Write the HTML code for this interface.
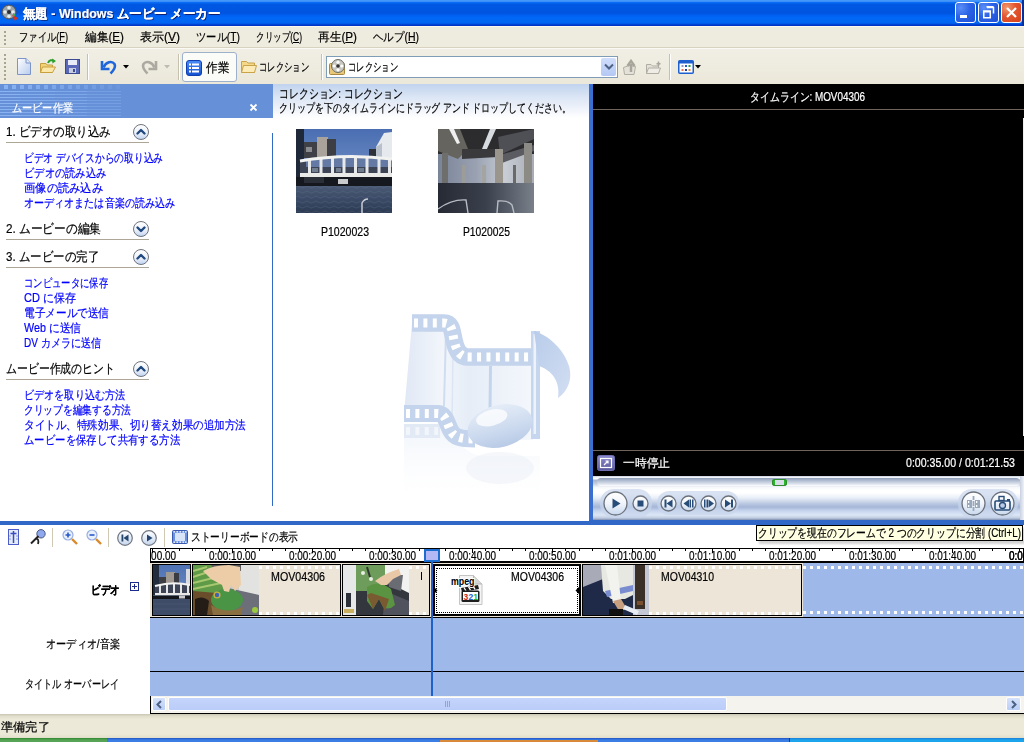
<!DOCTYPE html>
<html><head><meta charset="utf-8">
<style>
html,body{margin:0;padding:0;width:1024px;height:742px;overflow:hidden;background:#ECE9D8;font-family:"Liberation Sans",sans-serif;}
.a{position:absolute;}
.t{position:absolute;white-space:nowrap;font-size:12px;line-height:12px;color:#000;-webkit-text-stroke:0.2px currentColor;}
.f{transform-origin:0 0;}
.r{transform-origin:100% 0;}
</style></head><body>

<!-- TITLE BAR -->
<div class="a" style="left:0;top:0;width:1024px;height:26px;background:linear-gradient(#4A9CF8 0px,#3A8EF8 1.5px,#0A6CF4 2.5px,#0058E2 4.5px,#0054E0 13px,#0062F4 16px,#0068F6 18px,#0066F2 23px,#0044D4 24.5px,#0030C0 26px);"></div>
<div id="ttl" class="t f" style="left:23px;top:7px;width:205.719px;transform:scaleX(0.95762);font-size:13px;line-height:13px;font-weight:bold;color:#fff;text-shadow:1px 1px 0 #0A1E72;">無題 - Windows ムービー メーカー</div>
<!-- app icon -->
<svg class="a" style="left:1px;top:4px" width="18" height="18" viewBox="0 0 18 18">
 <circle cx="8" cy="8" r="7" fill="#9aa3a8" stroke="#4b5056" stroke-width="1"/>
 <circle cx="8" cy="8" r="2" fill="#2c2f33"/>
 <circle cx="8" cy="3.8" r="1.8" fill="#e8ecee"/><circle cx="4" cy="8" r="1.8" fill="#e8ecee"/><circle cx="12" cy="8" r="1.8" fill="#e8ecee"/><circle cx="8" cy="12.2" r="1.8" fill="#e8ecee"/>
 <path d="M11 11 L17 14 L14 17 Z" fill="#d8321c"/><path d="M12 9 L15 11 L12 13Z" fill="#3cae3a"/>
</svg>
<!-- window buttons -->
<div class="a" style="left:955px;top:2px;width:19px;height:19px;border:1px solid #fff;border-radius:3px;background:radial-gradient(circle at 25% 25%,#5a8ef8 0,#2c63e6 45%,#1d4fd6 100%);"></div>
<div class="a" style="left:960px;top:15px;width:7px;height:3px;background:#fff;"></div>
<div class="a" style="left:978px;top:2px;width:19px;height:19px;border:1px solid #fff;border-radius:3px;background:radial-gradient(circle at 25% 25%,#5a8ef8 0,#2c63e6 45%,#1d4fd6 100%);"></div>
<svg class="a" style="left:978px;top:2px" width="21" height="21"><path d="M9 5.5 H15.5 V11.5" fill="none" stroke="#fff" stroke-width="1.5"/><rect x="8.5" y="4" width="7" height="1.6" fill="#fff"/><rect x="5.75" y="9.25" width="6.5" height="6.5" fill="none" stroke="#fff" stroke-width="1.5"/><rect x="5" y="8.5" width="8" height="2" fill="#fff"/></svg>

<div class="a" style="left:1001px;top:2px;width:19px;height:19px;border:1px solid #fff;border-radius:3px;background:radial-gradient(circle at 25% 25%,#f09a70 0,#e3552e 45%,#d2421c 100%);"></div>
<svg class="a" style="left:1001px;top:2px" width="21" height="21"><path d="M6 6 L15 15 M15 6 L6 15" stroke="#fff" stroke-width="2.2"/></svg>
<div class="a" style="left:1022px;top:0;width:2px;height:26px;background:#0030a8;"></div>

<!-- MENU BAR -->
<div class="a" style="left:0;top:26px;width:1024px;height:22px;background:#EEEBDF;border-bottom:0;"></div><div class="a" style="left:0;top:26px;width:1024px;height:1px;background:#FBF8EC;"></div>
<div class="a" style="left:0;top:47px;width:1024px;height:1px;background:#D8D3C0;"></div>
<div class="a" style="left:0;top:48px;width:1024px;height:1px;background:#FAF9F4;"></div>
<div class="a" style="left:4px;top:31px;width:2px;height:14px;background:repeating-linear-gradient(#A8A48F 0 2px,transparent 2px 4px);"></div>
<div class="t f" style="left:19px;top:31px;width:63.344px;transform:scaleX(0.77356);">ファイル(<u>F</u>)</div>
<div class="t f" style="left:85px;top:31px;width:40.016px;transform:scaleX(0.97462);">編集(<u>E</u>)</div>
<div class="t f" style="left:140px;top:31px;width:40.016px;transform:scaleX(0.99961);">表示(<u>V</u>)</div>
<div class="t f" style="left:196px;top:31px;width:51.344px;transform:scaleX(0.85697);">ツール(<u>T</u>)</div>
<div class="t f" style="left:256px;top:31px;width:64.672px;transform:scaleX(0.71128);">クリップ(<u>C</u>)</div>
<div class="t f" style="left:318px;top:31px;width:40.016px;transform:scaleX(0.97462);">再生(<u>P</u>)</div>
<div class="t f" style="left:373px;top:31px;width:52.672px;transform:scaleX(0.87333);">ヘルプ(<u>H</u>)</div>

<!-- TOOLBAR -->
<div class="a" style="left:0;top:49px;width:1024px;height:35px;background:linear-gradient(#F1EFE5,#EBE8DA);"></div>
<div class="a" style="left:4px;top:54px;width:2px;height:26px;background:repeating-linear-gradient(#A8A48F 0 2px,transparent 2px 4px);"></div>

<!-- TOOLBAR CONTENT -->
<svg class="a" style="left:17px;top:58px" width="14" height="17" viewBox="0 0 14 17"><defs><linearGradient id="nd" x1="0" y1="0" x2="1" y2="1"><stop offset="0" stop-color="#fff"/><stop offset="1" stop-color="#B8CCEE"/></linearGradient></defs>
<path d="M.5 .5 H9 L13.5 5 V16.5 H.5 Z" fill="url(#nd)" stroke="#7C94C8"/><path d="M9 .5 V5 H13.5" fill="#DCE6F8" stroke="#7C94C8"/></svg>
<svg class="a" style="left:40px;top:58px" width="17" height="16" viewBox="0 0 17 16">
<path d="M.5 5.5 H6 L7 7 H12.5 V14.5 H.5 Z" fill="#F0D27A" stroke="#C8A040"/><path d="M2.5 9 H15.5 L12.5 14.5 H.5 Z" fill="#FBE8A8" stroke="#C8A040"/>
<path d="M8 5 C9 2 12 1.5 14 3" fill="none" stroke="#2DA02D" stroke-width="2"/><path d="M12 .5 L16 3 L12.5 5.5Z" fill="#2DA02D"/></svg>
<svg class="a" style="left:65px;top:59px" width="15" height="15" viewBox="0 0 15 15">
<rect x=".5" y=".5" width="14" height="14" fill="#5A68B8" stroke="#3C4A90"/><rect x="3" y="1" width="9" height="5" fill="#E8ECF8"/><rect x="4" y="9" width="7" height="5" fill="#C8CCE0"/><rect x="8" y="10" width="2" height="3" fill="#3C4A90"/></svg>
<div class="a" style="left:87px;top:54px;width:1px;height:26px;background:#C5C1AE;"></div><div class="a" style="left:88px;top:54px;width:1px;height:26px;background:#fff;"></div>
<!-- undo -->
<svg class="a" style="left:100px;top:58px" width="17" height="17" viewBox="0 0 17 17">
<path d="M2 3 V11 H9.5" fill="none" stroke="#1F66DA" stroke-width="2.6"/><path d="M3.5 9.5 C6 3.5 12 2.5 14.5 6 C16 9 13.5 12.5 10.5 15.5" fill="none" stroke="#1F66DA" stroke-width="2.6"/></svg>
<svg class="a" style="left:123px;top:65px" width="6" height="4"><path d="M0 0 H6 L3 3.5Z" fill="#000"/></svg>
<!-- redo (disabled) -->
<svg class="a" style="left:141px;top:58px" width="17" height="17" viewBox="0 0 17 17">
<path d="M15 3 V11 H7.5" fill="none" stroke="#ABA9A0" stroke-width="2.6"/><path d="M13.5 9.5 C11 3.5 5 2.5 2.5 6 C1 9 3.5 12.5 6.5 15.5" fill="none" stroke="#ABA9A0" stroke-width="2.6"/></svg>
<svg class="a" style="left:164px;top:65px" width="6" height="4"><path d="M0 0 H6 L3 3.5Z" fill="#BDBBB2"/></svg>
<div class="a" style="left:178px;top:54px;width:1px;height:26px;background:#C5C1AE;"></div><div class="a" style="left:179px;top:54px;width:1px;height:26px;background:#fff;"></div>
<div class="a" style="left:182px;top:52px;width:53px;height:28px;border:1px solid #9DB0CC;border-radius:3px;background:#FBFBF8;"></div>
<svg class="a" style="left:186px;top:60px" width="16" height="16" viewBox="0 0 16 16"><defs><linearGradient id="tk" x1="0" y1="0" x2="0" y2="1"><stop offset="0" stop-color="#4C8CF8"/><stop offset="1" stop-color="#1450D0"/></linearGradient></defs>
<rect x=".5" y=".5" width="15" height="15" rx="2.5" fill="url(#tk)" stroke="#1040B0"/>
<g fill="#fff"><rect x="3" y="3.5" width="2" height="2"/><rect x="6" y="3.5" width="7" height="2"/><rect x="3" y="7" width="2" height="2"/><rect x="6" y="7" width="7" height="2"/><rect x="3" y="10.5" width="2" height="2"/><rect x="6" y="10.5" width="7" height="2"/></g></svg>
<div class="t f" style="left:206px;top:61px;width:26.000px;transform:scaleX(0.88462);font-size:13px;line-height:13px;">作業</div>
<svg class="a" style="left:241px;top:60px" width="16" height="14" viewBox="0 0 16 14">
<path d="M.5 1.5 H5.5 L7 3 H13.5 V12.5 H.5 Z" fill="#F3D88A" stroke="#C9A24A"/><path d="M2.5 5.5 H15.5 L13.5 12.5 H.5 Z" fill="#FCEBB6" stroke="#C9A24A"/></svg>
<div class="t f" style="left:259px;top:61px;width:72.000px;transform:scaleX(0.69444);">コレクション</div>
<div class="a" style="left:321px;top:54px;width:1px;height:26px;background:#C5C1AE;"></div><div class="a" style="left:322px;top:54px;width:1px;height:26px;background:#fff;"></div>
<div class="a" style="left:326px;top:56px;width:290px;height:20px;border:1px solid #7F9DB9;background:#fff;"></div>
<div class="a" style="left:601px;top:58px;width:15px;height:18px;border-radius:2px;background:linear-gradient(#D0DEFC,#B4C8F4);"></div>
<svg class="a" style="left:604px;top:63px" width="10" height="7"><path d="M1 1.5 L5 5.5 L9 1.5" fill="none" stroke="#4D6185" stroke-width="2"/></svg>
<svg class="a" style="left:329px;top:58px" width="17" height="17" viewBox="0 0 17 17">
<rect x=".5" y="5.5" width="15" height="11" rx="1" fill="#E8C878" stroke="#A88840"/>
<circle cx="9" cy="8" r="6.5" fill="#C8C8C0" stroke="#6C6C64"/><circle cx="9" cy="8" r="1.8" fill="#333"/>
<circle cx="9" cy="4.2" r="1.6" fill="#fff"/><circle cx="5.2" cy="8" r="1.6" fill="#fff"/><circle cx="12.8" cy="8" r="1.6" fill="#fff"/><circle cx="9" cy="11.8" r="1.6" fill="#fff"/></svg>
<div class="t f" style="left:348px;top:61px;width:72.000px;transform:scaleX(0.69444);">コレクション</div>
<svg class="a" style="left:623px;top:59px" width="15" height="16" viewBox="0 0 15 16">
<path d="M.5 8.5 L6 6.5 L12.5 7.5 L11 15.5 L1.5 15.5Z" fill="#E4E2D8" stroke="#B0AEA4"/><path d="M8 13 V5 M4.5 7 L8 2 L11.5 7" fill="none" stroke="#A8A69C" stroke-width="2.5"/></svg>
<svg class="a" style="left:646px;top:61px" width="16" height="13" viewBox="0 0 16 13">
<path d="M.5 3.5 H5 L6.5 5 H12.5 V12.5 H.5Z" fill="#E4E2D8" stroke="#B0AEA4"/><path d="M2.5 7 H14.5 L12.5 12.5 H.5Z" fill="#EEECE4" stroke="#B0AEA4"/><path d="M12.5 .5 L12.5 5 M10.5 2.7 H14.5" stroke="#A8A69C" stroke-width="1.5"/></svg>
<div class="a" style="left:669px;top:54px;width:1px;height:26px;background:#C5C1AE;"></div><div class="a" style="left:670px;top:54px;width:1px;height:26px;background:#fff;"></div>
<svg class="a" style="left:678px;top:60px" width="16" height="14" viewBox="0 0 16 14">
<rect x=".75" y=".75" width="14.5" height="12.5" rx="1" fill="#fff" stroke="#1E5FD0" stroke-width="1.5"/><rect x="1" y="1" width="14" height="2.5" fill="#1E5FD0"/>
<rect x="3.5" y="5" width="2" height="2" fill="#8E9AC8"/><rect x="7" y="5" width="2" height="2" fill="#1E5FD0"/><rect x="10.5" y="5" width="2" height="2" fill="#2A9A3A"/>
<rect x="3.5" y="9" width="2" height="2" fill="#E8745A"/><rect x="7" y="9" width="2" height="2" fill="#1E3FA0"/><rect x="10.5" y="9" width="2" height="2" fill="#E88A2A"/></svg>
<svg class="a" style="left:695px;top:65px" width="6" height="4"><path d="M0 0 H6 L3 3.5Z" fill="#000"/></svg>
<!-- MAIN PANES -->
<!-- left task pane -->
<div class="a" style="left:0;top:84px;width:273px;height:437px;background:#fff;"></div>
<div class="a" style="left:0;top:84px;width:273px;height:34px;background:#6691D8;"></div>
<!-- TASK PANE -->
<div class="a" style="left:4px;top:85px;width:4px;height:4px;background:rgba(150,190,250,0.75);"></div><div class="a" style="left:12px;top:85px;width:4px;height:4px;background:rgba(150,190,250,0.70);"></div><div class="a" style="left:20px;top:85px;width:4px;height:4px;background:rgba(150,190,250,0.66);"></div><div class="a" style="left:28px;top:85px;width:4px;height:4px;background:rgba(150,190,250,0.61);"></div><div class="a" style="left:36px;top:85px;width:4px;height:4px;background:rgba(150,190,250,0.57);"></div><div class="a" style="left:44px;top:85px;width:4px;height:4px;background:rgba(150,190,250,0.53);"></div><div class="a" style="left:52px;top:85px;width:4px;height:4px;background:rgba(150,190,250,0.48);"></div><div class="a" style="left:60px;top:85px;width:4px;height:4px;background:rgba(150,190,250,0.43);"></div><div class="a" style="left:68px;top:85px;width:4px;height:4px;background:rgba(150,190,250,0.39);"></div><div class="a" style="left:76px;top:85px;width:4px;height:4px;background:rgba(150,190,250,0.35);"></div><div class="a" style="left:84px;top:85px;width:4px;height:4px;background:rgba(150,190,250,0.30);"></div><div class="a" style="left:92px;top:85px;width:4px;height:4px;background:rgba(150,190,250,0.26);"></div><div class="a" style="left:100px;top:85px;width:4px;height:4px;background:rgba(150,190,250,0.21);"></div><div class="a" style="left:108px;top:85px;width:4px;height:4px;background:rgba(150,190,250,0.17);"></div><div class="a" style="left:116px;top:85px;width:4px;height:4px;background:rgba(150,190,250,0.12);"></div><div class="a" style="left:0;top:91px;width:121px;height:1px;background:linear-gradient(90deg,rgba(150,190,250,.75) 0 20px,rgba(150,190,250,.62) 20px 55px,rgba(150,190,250,.5) 55px 87px,rgba(150,190,250,.3) 87px);"></div><div class="a" style="left:0;top:94px;width:121px;height:1px;background:linear-gradient(90deg,rgba(150,190,250,.75) 0 20px,rgba(150,190,250,.62) 20px 55px,rgba(150,190,250,.5) 55px 87px,rgba(150,190,250,.3) 87px);"></div><div class="a" style="left:0;top:97px;width:121px;height:1px;background:linear-gradient(90deg,rgba(150,190,250,.75) 0 20px,rgba(150,190,250,.62) 20px 55px,rgba(150,190,250,.5) 55px 87px,rgba(150,190,250,.3) 87px);"></div><div class="a" style="left:0;top:100px;width:121px;height:1px;background:linear-gradient(90deg,rgba(150,190,250,.75) 0 20px,rgba(150,190,250,.62) 20px 55px,rgba(150,190,250,.5) 55px 87px,rgba(150,190,250,.3) 87px);"></div><div class="a" style="left:0;top:103px;width:121px;height:1px;background:linear-gradient(90deg,rgba(150,190,250,.75) 0 20px,rgba(150,190,250,.62) 20px 55px,rgba(150,190,250,.5) 55px 87px,rgba(150,190,250,.3) 87px);"></div><div class="a" style="left:0;top:106px;width:121px;height:1px;background:linear-gradient(90deg,rgba(150,190,250,.75) 0 20px,rgba(150,190,250,.62) 20px 55px,rgba(150,190,250,.5) 55px 87px,rgba(150,190,250,.3) 87px);"></div><div class="a" style="left:0;top:109px;width:121px;height:1px;background:linear-gradient(90deg,rgba(150,190,250,.75) 0 20px,rgba(150,190,250,.62) 20px 55px,rgba(150,190,250,.5) 55px 87px,rgba(150,190,250,.3) 87px);"></div><div class="a" style="left:0;top:112px;width:121px;height:1px;background:linear-gradient(90deg,rgba(150,190,250,.75) 0 20px,rgba(150,190,250,.62) 20px 55px,rgba(150,190,250,.5) 55px 87px,rgba(150,190,250,.3) 87px);"></div><div class="a" style="left:0;top:115px;width:121px;height:1px;background:linear-gradient(90deg,rgba(150,190,250,.75) 0 20px,rgba(150,190,250,.62) 20px 55px,rgba(150,190,250,.5) 55px 87px,rgba(150,190,250,.3) 87px);"></div>
<div class="t f" style="left:12px;top:102px;width:72.000px;transform:scaleX(0.84722);color:#fff;">ムービー作業</div>
<svg class="a" style="left:249px;top:103px" width="9" height="9"><path d="M1.5 1.5 L7.5 7.5 M7.5 1.5 L1.5 7.5" stroke="#fff" stroke-width="1.8"/></svg>
<div class="t f" style="left:6px;top:125px;width:118.469px;transform:scaleX(0.88631);font-size:13px;line-height:13px;">1. ビデオの取り込み</div><div class="a" style="left:6px;top:142px;width:143px;height:1px;background:#ADA596;"></div><svg class="a" style="left:133px;top:124px" width="16" height="16" viewBox="0 0 16 16"><defs><linearGradient id="cg142" x1="0" y1="0" x2="0" y2="1"><stop offset="0" stop-color="#fff"/><stop offset=".55" stop-color="#EEF2FA"/><stop offset="1" stop-color="#BFD3F2"/></linearGradient></defs><circle cx="8" cy="8" r="7.5" fill="url(#cg142)" stroke="#6F747C" stroke-width="1"/><path d="M4.5 9.5 L8 6 L11.5 9.5" fill="none" stroke="#20497F" stroke-width="2.4" stroke-linecap="round" stroke-linejoin="round"/></svg>
<div class="t f" style="left:24px;top:152px;width:171.344px;transform:scaleX(0.81123);color:#0000FF;">ビデオ デバイスからの取り込み</div>
<div class="t f" style="left:24px;top:167px;width:96.000px;transform:scaleX(0.85417);color:#0000FF;">ビデオの読み込み</div>
<div class="t f" style="left:24px;top:182px;width:84.000px;transform:scaleX(0.94048);color:#0000FF;">画像の読み込み</div>
<div class="t f" style="left:24px;top:197px;width:180.000px;transform:scaleX(0.83889);color:#0000FF;">オーディオまたは音楽の読み込み</div>
<div class="t f" style="left:6px;top:222px;width:105.469px;transform:scaleX(0.90074);font-size:13px;line-height:13px;">2. ムービーの編集</div><div class="a" style="left:6px;top:239px;width:143px;height:1px;background:#ADA596;"></div><svg class="a" style="left:133px;top:221px" width="16" height="16" viewBox="0 0 16 16"><defs><linearGradient id="cg239" x1="0" y1="0" x2="0" y2="1"><stop offset="0" stop-color="#fff"/><stop offset=".55" stop-color="#EEF2FA"/><stop offset="1" stop-color="#BFD3F2"/></linearGradient></defs><circle cx="8" cy="8" r="7.5" fill="url(#cg239)" stroke="#6F747C" stroke-width="1"/><path d="M4.5 6.5 L8 10 L11.5 6.5" fill="none" stroke="#20497F" stroke-width="2.4" stroke-linecap="round" stroke-linejoin="round"/></svg>
<div class="t f" style="left:6px;top:250px;width:105.469px;transform:scaleX(0.88178);font-size:13px;line-height:13px;">3. ムービーの完了</div><div class="a" style="left:6px;top:267px;width:143px;height:1px;background:#ADA596;"></div><svg class="a" style="left:133px;top:249px" width="16" height="16" viewBox="0 0 16 16"><defs><linearGradient id="cg267" x1="0" y1="0" x2="0" y2="1"><stop offset="0" stop-color="#fff"/><stop offset=".55" stop-color="#EEF2FA"/><stop offset="1" stop-color="#BFD3F2"/></linearGradient></defs><circle cx="8" cy="8" r="7.5" fill="url(#cg267)" stroke="#6F747C" stroke-width="1"/><path d="M4.5 9.5 L8 6 L11.5 9.5" fill="none" stroke="#20497F" stroke-width="2.4" stroke-linecap="round" stroke-linejoin="round"/></svg>
<div class="t f" style="left:24px;top:277px;width:108.000px;transform:scaleX(0.77778);color:#0000FF;">コンピュータに保存</div>
<div class="t f" style="left:24px;top:292px;width:56.672px;transform:scaleX(0.91756);color:#0000FF;">CD に保存</div>
<div class="t f" style="left:24px;top:307px;width:96.000px;transform:scaleX(0.88542);color:#0000FF;">電子メールで送信</div>
<div class="t f" style="left:24px;top:322px;width:63.797px;transform:scaleX(0.89346);color:#0000FF;">Web に送信</div>
<div class="t f" style="left:24px;top:337px;width:92.016px;transform:scaleX(0.83681);color:#0000FF;">DV カメラに送信</div>
<div class="t f" style="left:6px;top:362px;width:130.000px;transform:scaleX(0.83846);font-size:13px;line-height:13px;">ムービー作成のヒント</div><div class="a" style="left:6px;top:379px;width:143px;height:1px;background:#ADA596;"></div><svg class="a" style="left:133px;top:361px" width="16" height="16" viewBox="0 0 16 16"><defs><linearGradient id="cg379" x1="0" y1="0" x2="0" y2="1"><stop offset="0" stop-color="#fff"/><stop offset=".55" stop-color="#EEF2FA"/><stop offset="1" stop-color="#BFD3F2"/></linearGradient></defs><circle cx="8" cy="8" r="7.5" fill="url(#cg379)" stroke="#6F747C" stroke-width="1"/><path d="M4.5 9.5 L8 6 L11.5 9.5" fill="none" stroke="#20497F" stroke-width="2.4" stroke-linecap="round" stroke-linejoin="round"/></svg>
<div class="t f" style="left:24px;top:389px;width:120.000px;transform:scaleX(0.84167);color:#0000FF;">ビデオを取り込む方法</div>
<div class="t f" style="left:24px;top:404px;width:132.000px;transform:scaleX(0.81061);color:#0000FF;">クリップを編集する方法</div>
<div class="t f" style="left:24px;top:419px;width:252.000px;transform:scaleX(0.88095);color:#0000FF;">タイトル、特殊効果、切り替え効果の追加方法</div>
<div class="t f" style="left:24px;top:434px;width:180.000px;transform:scaleX(0.86667);color:#0000FF;">ムービーを保存して共有する方法</div>
<!-- collection pane -->
<div class="a" style="left:273px;top:84px;width:316px;height:437px;background:#fff;"></div>
<div class="a" style="left:273px;top:84px;width:316px;height:34px;background:linear-gradient(#C0D3EE,#DCE6F5 40%,#F6F8FD 85%,#fff);"></div>
<div class="a" style="left:272px;top:133px;width:1px;height:373px;background:#316AC5;"></div>
<!-- COLLECTION CONTENT -->
<div class="t f" style="left:279px;top:87px;width:163.234px;transform:scaleX(0.75964);font-size:13px;line-height:13px;">コレクション: コレクション</div>
<div class="t f" style="left:279px;top:102px;width:390.672px;transform:scaleX(0.74743);">クリップを下のタイムラインにドラッグ アンド ドロップしてください。</div>
<svg class="a" style="left:296px;top:129px" width="96" height="84" viewBox="0 0 96 84">
<defs><linearGradient id="s1" x1="0" y1="0" x2="0" y2="1"><stop offset="0" stop-color="#4A6EB2"/><stop offset="1" stop-color="#8AA6D0"/></linearGradient>
<linearGradient id="w1" x1="0" y1="0" x2="0" y2="1"><stop offset="0" stop-color="#4A5A74"/><stop offset=".5" stop-color="#3A4A66"/><stop offset="1" stop-color="#2C3A52"/></linearGradient>
<pattern id="rp1" width="9" height="5" patternUnits="userSpaceOnUse"><rect width="9" height="5" fill="none"/><path d="M0 3 Q2 1 4 3 T9 3" stroke="#6A7A98" stroke-width=".7" fill="none" opacity=".35"/></pattern></defs>
<rect width="96" height="84" fill="url(#s1)"/>
<rect x="0" y="0" width="8" height="52" fill="#1E2838"/>
<rect x="8" y="13" width="14" height="16" fill="#3E4046"/><rect x="10" y="18" width="6" height="5" fill="#8A8C90"/>
<rect x="21" y="8" width="11" height="21" fill="#A9A39B"/><rect x="31" y="10" width="9" height="19" fill="#3C3E44"/>
<rect x="73" y="20" width="7" height="10" fill="#2E3238"/>
<path d="M80 18 L88 4 L96 3 L96 55 L80 55Z" fill="#E6EAEE"/><path d="M80 18 L86 14 L86 55 L80 55Z" fill="#B8C0CC"/>
<path d="M4 32 Q48 24 96 30 L96 48 L4 48Z" fill="#3C4456"/>
<path d="M10 31 Q48 26 96 31 L96 38 L10 38Z" fill="#6E88B8" opacity=".8"/>
<g fill="#E6E8EA"><rect x="12" y="30" width="3" height="17"/><rect x="23.5" y="28.5" width="3" height="18"/><rect x="35" y="27.5" width="3" height="19"/><rect x="46.5" y="27" width="3" height="20"/><rect x="58" y="27" width="3" height="20"/><rect x="69.5" y="27.5" width="3" height="19"/><rect x="81.5" y="28.5" width="3" height="18"/><rect x="92" y="29.5" width="3" height="17"/></g>
<path d="M4 32 Q48 24 96 30" stroke="#F2F2F0" stroke-width="3" fill="none"/>
<rect x="4" y="44" width="92" height="4" fill="#EAEAE8"/>
<g fill="#8A94A8" opacity=".7"><rect x="16" y="39" width="6" height="4"/><rect x="40" y="39" width="5" height="4"/><rect x="62" y="39" width="6" height="4"/></g>
<rect x="0" y="48" width="96" height="9" fill="#15181E"/><rect x="42" y="50" width="10" height="5" fill="#C8CACC"/><rect x="8" y="48" width="20" height="6" fill="#2A2E36"/>
<rect x="0" y="57" width="96" height="27" fill="url(#w1)"/><rect x="0" y="57" width="96" height="27" fill="url(#rp1)"/>
<path d="M66 84 L66 74 Q68 70 72 70" stroke="#C8CCD4" stroke-width="1.5" fill="none"/>
</svg>
<svg class="a" style="left:438px;top:129px" width="96" height="84" viewBox="0 0 96 84">
<defs><linearGradient id="w2" x1="0" y1="0" x2="1" y2="0"><stop offset="0" stop-color="#262A34"/><stop offset=".5" stop-color="#3A404C"/><stop offset="1" stop-color="#7A808A"/></linearGradient>
<linearGradient id="m2" x1="0" y1="0" x2="1" y2="0"><stop offset="0" stop-color="#7A8498"/><stop offset=".4" stop-color="#9AA2B2"/><stop offset=".7" stop-color="#C8CCD4"/><stop offset="1" stop-color="#A8ACB4"/></linearGradient></defs>
<rect width="96" height="84" fill="#2C2C2E"/>
<rect x="0" y="25" width="96" height="30" fill="url(#m2)"/>
<path d="M0 0 L22 0 L30 20 L20 30 L0 22Z" fill="#66645E"/>
<path d="M11 0 L16 0 L22 14 L19 15Z" fill="#F0F0F0"/>
<path d="M52 0 L58 0 L48 22 L44 20Z" fill="#D8DCE0"/>
<path d="M60 8 L96 0 L96 10 L62 26Z" fill="#4E5056"/><path d="M62 26 L96 16 L96 22 L64 34Z" fill="#5A5C62"/>
<path d="M24 20 L60 20 L60 28 L24 30Z" fill="#3A3A3C"/>
<rect x="4" y="24" width="6" height="30" fill="#6E6E6C"/>
<rect x="24" y="36" width="4" height="18" fill="#9C9C98"/><rect x="44" y="36" width="4" height="18" fill="#A4A4A0"/>
<rect x="57" y="20" width="8" height="36" fill="#9A968E"/>
<rect x="75" y="36" width="3" height="18" fill="#6A6A68"/>
<rect x="86" y="14" width="8" height="46" fill="#8C8A84"/>
<rect x="0" y="54" width="96" height="30" fill="url(#w2)"/>
<path d="M0 80 Q14 70 28 71 L30 84" stroke="#B8BCC4" stroke-width="1.4" fill="none"/>
<path d="M59 84 L60 72 Q70 71 74 76 L76 84" stroke="#B8BCC4" stroke-width="1.4" fill="none"/>
</svg>
<div class="t f" style="left:321px;top:226px;width:54.734px;transform:scaleX(0.87696);">P1020023</div>
<div class="t f" style="left:463px;top:226px;width:54.734px;transform:scaleX(0.85869);">P1020025</div>
<svg class="a" style="left:395px;top:305px" width="185" height="215" viewBox="395 305 185 215">
<defs>
 <linearGradient id="face" x1="0" y1="0" x2="1" y2="0"><stop offset="0" stop-color="#E0E8F5"/><stop offset=".3" stop-color="#F2F6FB"/><stop offset=".5" stop-color="#E6EDF7"/><stop offset="1" stop-color="#F4F7FC"/></linearGradient>
 <linearGradient id="head" x1="0" y1="0" x2="0" y2="1"><stop offset="0" stop-color="#E4ECF7"/><stop offset=".6" stop-color="#CCDAEF"/><stop offset="1" stop-color="#B8CAE6"/></linearGradient>
 <linearGradient id="flag" x1="0" y1="0" x2="1" y2="1"><stop offset="0" stop-color="#B8CCEA"/><stop offset="1" stop-color="#D2DEF2"/></linearGradient>
 <linearGradient id="refl" x1="0" y1="0" x2="0" y2="1"><stop offset="0" stop-color="#DCE6F4" stop-opacity=".9"/><stop offset="1" stop-color="#fff" stop-opacity="0"/></linearGradient>
</defs>
<!-- reflection -->
<path d="M404 424 L440 424 C452 430 460 452 480 456 L540 456 L540 505 L404 505Z" fill="url(#refl)" opacity=".5"/>
<path d="M404 431 L440 431" stroke="#DCE5F3" stroke-width="14" opacity=".7"/>
<path d="M406 431 L438 431" stroke="#F6F8FC" stroke-width="8" stroke-dasharray="4 5.4" opacity=".8"/>
<ellipse cx="500" cy="468" rx="34" ry="16" fill="#E8EEF7" opacity=".45"/>
<!-- face -->
<path d="M412 323 L444 323 C452 323 452 331 454 340 C456 350 460 357 468 357 L533 357 L533 440 L472 439 C460 439 454 437 451 431 C447 424 446 414 438 413.6 L404 413.6 Z" fill="url(#face)"/>
<path d="M446 331 L444 406" stroke="#D0DCEF" stroke-width="2"/><path d="M453 350 L452 428" stroke="#DCE5F3" stroke-width="1.5"/>
<!-- upper strip -->
<path d="M412 323 L444 323 C452 323 452 331 454 340 C456 350 460 357 468 357 L533 357" fill="none" stroke="#C3D4EC" stroke-width="17.5"/>
<path d="M414 323 L444 323 C452 323 452 331 454 340 C456 350 460 357 468 357 L531 357" fill="none" stroke="#FFFFFF" stroke-width="9" stroke-dasharray="4 5.4"/>
<!-- lower strip -->
<path d="M404 413.6 L438 413.6 C446 414 447 424 451 431 C454 437 460 439 475 439" fill="none" stroke="#C3D4EC" stroke-width="17"/>
<path d="M406 413.6 L438 413.6 C446 414 447 424 451 431 C454 437 460 439 475 439" fill="none" stroke="#FFFFFF" stroke-width="9" stroke-dasharray="4 5.4"/>
<!-- thin stem -->
<path d="M490.5 366 L490 410" stroke="#C4D4EC" stroke-width="3"/>
<!-- thick stem -->
<rect x="531" y="331" width="9" height="108" fill="#C6D6EE"/><rect x="533.5" y="334" width="2.5" height="100" fill="#EEF3FA"/>
<!-- flag -->
<path d="M534 331 C550 336 564 350 569 366 C573 380 567 392 558 398 C560 386 556 372 539 366 Z" fill="url(#flag)"/>
<!-- note head -->
<g transform="rotate(-14 500 426)">
<ellipse cx="500" cy="426" rx="33" ry="21" fill="url(#head)"/>
<ellipse cx="494" cy="416" rx="16" ry="8" fill="#fff" opacity=".75"/>
</g>
</svg>
<!-- splitter -->
<div class="a" style="left:589px;top:84px;width:4px;height:437px;background:#3A6FD0;"></div>
<!-- preview pane -->
<div class="a" style="left:593px;top:84px;width:431px;height:392px;background:#000;"></div>
<div class="a" style="left:593px;top:109px;width:431px;height:1px;background:#6E665C;"></div>
<div class="a" style="left:593px;top:450px;width:431px;height:1px;background:#6E665C;"></div>
<div class="a" style="left:1023px;top:118px;width:1px;height:318px;background:#F2EEE0;"></div>

<!-- PREVIEW CONTENT -->
<div class="t f" style="left:750px;top:91px;width:139.375px;transform:scaleX(0.82511);color:#fff;">タイムライン: MOV04306</div>
<svg class="a" style="left:597px;top:455px" width="18" height="16" viewBox="0 0 18 16">
<defs><linearGradient id="fsg" x1="0" y1="0" x2="0" y2="1"><stop offset="0" stop-color="#8C8CD0"/><stop offset="1" stop-color="#5A5A9C"/></linearGradient></defs>
<rect x=".5" y=".5" width="17" height="15" rx="2" fill="url(#fsg)" stroke="#6E6EB0"/>
<rect x="3.5" y="3.5" width="11" height="9" fill="none" stroke="#fff" stroke-width="1.2"/>
<path d="M7 10 L11 6 M8.5 6 L11 6 L11 8.5" stroke="#fff" stroke-width="1.2" fill="none"/></svg>
<div class="t f" style="left:623px;top:457px;width:48.000px;transform:scaleX(0.97917);color:#fff;">一時停止</div>
<div class="t f" style="left:906px;top:457px;width:123.453px;transform:scaleX(0.88293);color:#fff;">0:00:35.00 / 0:01:21.53</div>
<div class="a" style="left:593px;top:476px;width:431px;height:44px;background:linear-gradient(#C4CCDC 0px,#E8ECF4 1px,#fff 2px,#fff 3px,#A8B4CC 4px,#C8D0E0 8px,#F4F6FA 11px,#fff 14px,#fff 17px,#E8EEF8 22px,#B8C6E0 28px,#A4B6D8 31px,#C8D6EE 35px,#DCE6F6 39px,#C0CCE0 42px,#8090B0 44px);"></div>
<div class="a" style="left:1020px;top:476px;width:4px;height:44px;background:linear-gradient(90deg,#C8D0E0,#F0F2F8);"></div>
<div class="a" style="left:597px;top:478px;width:423px;height:8px;border-radius:4px;background:linear-gradient(#8E9CB8,#B8C4D8 40%,#E4E8F0 80%,#fff);"></div>
<div class="a" style="left:772px;top:479px;width:15px;height:7px;border-radius:3px;background:linear-gradient(90deg,#28B828 0 3px,#D8DCE8 3px 12px,#28B828 12px);box-shadow:0 0 0 1px #2F8A2F inset;"></div>
<div class="a" style="left:600px;top:489px;width:52px;height:29px;border-radius:14px;background:rgba(200,214,236,.7);"></div>
<div class="a" style="left:657px;top:491px;width:82px;height:24px;border-radius:12px;background:rgba(200,214,236,.7);"></div>
<svg class="a" style="left:603px;top:491px" width="25" height="25" viewBox="0 0 25 25"><defs><linearGradient id="pb1" x1="0" y1="0" x2="0" y2="1"><stop offset="0" stop-color="#FFFFFF"/><stop offset=".5" stop-color="#F0F4FA"/><stop offset="1" stop-color="#C8D8EE"/></linearGradient></defs><circle cx="12.5" cy="12.5" r="11.5" fill="url(#pb1)" stroke="#6C727C" stroke-width="1.3"/><path d="M9.5 7.5 L17.5 12.5 L9.5 17.5 Z" fill="#284C78"/></svg>
<svg class="a" style="left:632px;top:495px" width="17" height="17" viewBox="0 0 17 17"><defs><linearGradient id="pb2" x1="0" y1="0" x2="0" y2="1"><stop offset="0" stop-color="#FFFFFF"/><stop offset=".5" stop-color="#F0F4FA"/><stop offset="1" stop-color="#C8D8EE"/></linearGradient></defs><circle cx="8.5" cy="8.5" r="7.5" fill="url(#pb2)" stroke="#6C727C" stroke-width="1.3"/><rect x="5.5" y="5.5" width="6" height="6" fill="#284C78"/></svg>
<svg class="a" style="left:660px;top:495px" width="17" height="17" viewBox="0 0 17 17"><defs><linearGradient id="pb3" x1="0" y1="0" x2="0" y2="1"><stop offset="0" stop-color="#FFFFFF"/><stop offset=".5" stop-color="#F0F4FA"/><stop offset="1" stop-color="#C8D8EE"/></linearGradient></defs><circle cx="8.5" cy="8.5" r="7.5" fill="url(#pb3)" stroke="#6C727C" stroke-width="1.3"/><rect x="4.5" y="4.5" width="2" height="8" fill="#284C78"/><path d="M12.5 4.5 L6.5 8.5 L12.5 12.5Z" fill="#284C78"/></svg>
<svg class="a" style="left:680px;top:495px" width="17" height="17" viewBox="0 0 17 17"><defs><linearGradient id="pb4" x1="0" y1="0" x2="0" y2="1"><stop offset="0" stop-color="#FFFFFF"/><stop offset=".5" stop-color="#F0F4FA"/><stop offset="1" stop-color="#C8D8EE"/></linearGradient></defs><circle cx="8.5" cy="8.5" r="7.5" fill="url(#pb4)" stroke="#6C727C" stroke-width="1.3"/><path d="M9 4.5 L3.5 8.5 L9 12.5Z" fill="#284C78"/><rect x="9.5" y="4.5" width="1.5" height="8" fill="#284C78"/><rect x="12" y="4.5" width="1.5" height="8" fill="#284C78"/></svg>
<svg class="a" style="left:700px;top:495px" width="17" height="17" viewBox="0 0 17 17"><defs><linearGradient id="pb5" x1="0" y1="0" x2="0" y2="1"><stop offset="0" stop-color="#FFFFFF"/><stop offset=".5" stop-color="#F0F4FA"/><stop offset="1" stop-color="#C8D8EE"/></linearGradient></defs><circle cx="8.5" cy="8.5" r="7.5" fill="url(#pb5)" stroke="#6C727C" stroke-width="1.3"/><rect x="4" y="4.5" width="1.5" height="8" fill="#284C78"/><rect x="6.5" y="4.5" width="1.5" height="8" fill="#284C78"/><path d="M8.5 4.5 L14 8.5 L8.5 12.5Z" fill="#284C78"/></svg>
<svg class="a" style="left:720px;top:495px" width="17" height="17" viewBox="0 0 17 17"><defs><linearGradient id="pb6" x1="0" y1="0" x2="0" y2="1"><stop offset="0" stop-color="#FFFFFF"/><stop offset=".5" stop-color="#F0F4FA"/><stop offset="1" stop-color="#C8D8EE"/></linearGradient></defs><circle cx="8.5" cy="8.5" r="7.5" fill="url(#pb6)" stroke="#6C727C" stroke-width="1.3"/><path d="M5 4.5 L11 8.5 L5 12.5Z" fill="#284C78"/><rect x="11" y="4.5" width="2" height="8" fill="#284C78"/></svg>
<div class="a" style="left:958px;top:489px;width:60px;height:29px;border-radius:14px;background:rgba(200,214,236,.7);"></div>
<svg class="a" style="left:961px;top:491px" width="25" height="25" viewBox="0 0 25 25"><defs><linearGradient id="pb7" x1="0" y1="0" x2="0" y2="1"><stop offset="0" stop-color="#FFFFFF"/><stop offset=".5" stop-color="#F0F4FA"/><stop offset="1" stop-color="#C8D8EE"/></linearGradient></defs><circle cx="12.5" cy="12.5" r="11.5" fill="url(#pb7)" stroke="#6C727C" stroke-width="1.3"/><g fill="#9AA8BC"><rect x="6" y="9" width="5" height="8"/><rect x="14" y="9" width="5" height="8"/><rect x="11.6" y="5" width="1.8" height="4"/><rect x="11.6" y="10" width="1.8" height="5"/><rect x="11.6" y="16" width="1.8" height="4"/></g><g fill="#fff"><rect x="7" y="10" width="1.3" height="2"/><rect x="7" y="14" width="1.3" height="2"/><rect x="15" y="10" width="1.3" height="2"/><rect x="15" y="14" width="1.3" height="2"/></g></svg>
<svg class="a" style="left:990px;top:491px" width="25" height="25" viewBox="0 0 25 25"><defs><linearGradient id="pb8" x1="0" y1="0" x2="0" y2="1"><stop offset="0" stop-color="#FFFFFF"/><stop offset=".5" stop-color="#F0F4FA"/><stop offset="1" stop-color="#C8D8EE"/></linearGradient></defs><circle cx="12.5" cy="12.5" r="11.5" fill="url(#pb8)" stroke="#6C727C" stroke-width="1.3"/><rect x="5" y="10" width="15" height="9" rx="1" fill="none" stroke="#284C78" stroke-width="1.6"/><rect x="9" y="5.5" width="5" height="4" fill="none" stroke="#284C78" stroke-width="1.4"/><circle cx="12.5" cy="14.5" r="3" fill="#B8CCE8" stroke="#284C78" stroke-width="1.3"/><rect x="17" y="8" width="3" height="2" fill="#284C78"/></svg>
<!-- horizontal splitter -->
<div class="a" style="left:0;top:521px;width:1024px;height:4px;background:#3168C8;"></div><div class="a" style="left:589px;top:520px;width:435px;height:1px;background:#3168C8;"></div>
<div class="a" style="left:0;top:520px;width:589px;height:1px;background:#fff;"></div>

<!-- TIMELINE -->
<div class="a" style="left:0;top:525px;width:1024px;height:189px;background:#fff;"></div>
<!-- tracks -->
<div class="a" style="left:150px;top:562px;width:874px;height:134px;background:#9DB8E9;"></div>
<!-- TIMELINE CONTENT -->
<svg class="a" style="left:8px;top:529px" width="11" height="16" viewBox="0 0 11 16"><rect x=".5" y=".5" width="10" height="15" fill="#E4ECFA" stroke="#4C5CC8"/>
<path d="M5.5 2 V14 M2.5 4.5 H8.5" stroke="#3A4CC0" stroke-width="1.5"/><path d="M1 7 H3 M8 7 H10 M1 10 H3 M8 10 H10" stroke="#8C9CE0"/></svg>
<svg class="a" style="left:30px;top:529px" width="16" height="16" viewBox="0 0 16 16"><circle cx="11" cy="4.8" r="4.2" fill="#8FA8EE" stroke="#4A5A80"/>
<path d="M8.5 7 L1 14.5" stroke="#222" stroke-width="2"/><path d="M6 10 C8 9 9 12 8 15" fill="none" stroke="#222" stroke-width="1.8"/></svg>
<div class="a" style="left:52px;top:528px;width:1px;height:19px;background:#CFC8B2;"></div>
<svg class="a" style="left:62px;top:529px" width="16" height="16" viewBox="0 0 16 16"><path d="M10 10 L15 15" stroke="#D88A2A" stroke-width="2.4"/><circle cx="6" cy="6" r="5" fill="#E8F0FC" stroke="#98AEE0" stroke-width="1.2"/><path d="M3.5 6 H8.5 M6 3.5 V8.5" stroke="#2858C8" stroke-width="1.6"/></svg>
<svg class="a" style="left:86px;top:529px" width="16" height="16" viewBox="0 0 16 16"><path d="M10 10 L15 15" stroke="#D88A2A" stroke-width="2.4"/><circle cx="6" cy="6" r="5" fill="#E8F0FC" stroke="#98AEE0" stroke-width="1.2"/><path d="M3.5 6 H8.5" stroke="#2858C8" stroke-width="1.6"/></svg>
<div class="a" style="left:108px;top:528px;width:1px;height:19px;background:#CFC8B2;"></div>
<svg class="a" style="left:117px;top:530px" width="16" height="16" viewBox="0 0 16 16"><defs><linearGradient id="tb1" x1="0" y1="0" x2="0" y2="1"><stop offset="0" stop-color="#fff"/><stop offset="1" stop-color="#C6D6EE"/></linearGradient></defs><circle cx="8" cy="8" r="7.3" fill="url(#tb1)" stroke="#707680" stroke-width="1.2"/><rect x="4.5" y="4.5" width="1.8" height="7" fill="#24466E"/><path d="M11.5 4.5 L6.5 8 L11.5 11.5Z" fill="#24466E"/></svg>
<svg class="a" style="left:141px;top:530px" width="16" height="16" viewBox="0 0 16 16"><defs><linearGradient id="tb2" x1="0" y1="0" x2="0" y2="1"><stop offset="0" stop-color="#fff"/><stop offset="1" stop-color="#C6D6EE"/></linearGradient></defs><circle cx="8" cy="8" r="7.3" fill="url(#tb2)" stroke="#707680" stroke-width="1.2"/><path d="M6 4.5 L11.5 8 L6 11.5Z" fill="#24466E"/></svg>
<div class="a" style="left:164px;top:528px;width:1px;height:19px;background:#CFC8B2;"></div>
<svg class="a" style="left:172px;top:530px" width="16" height="14" viewBox="0 0 16 14"><rect x=".5" y=".5" width="15" height="13" rx="1" fill="#6A90E0" stroke="#3A5AB0"/>
<rect x="3" y="3" width="10" height="8" fill="#D8E4F8"/><g fill="#fff"><rect x="1.5" y="1.2" width="1.5" height="1.3"/><rect x="4.5" y="1.2" width="1.5" height="1.3"/><rect x="7.5" y="1.2" width="1.5" height="1.3"/><rect x="10.5" y="1.2" width="1.5" height="1.3"/><rect x="13" y="1.2" width="1.5" height="1.3"/>
<rect x="1.5" y="11.5" width="1.5" height="1.3"/><rect x="4.5" y="11.5" width="1.5" height="1.3"/><rect x="7.5" y="11.5" width="1.5" height="1.3"/><rect x="10.5" y="11.5" width="1.5" height="1.3"/><rect x="13" y="11.5" width="1.5" height="1.3"/></g></svg>
<div class="t f" style="left:191px;top:531px;width:132.000px;transform:scaleX(0.81061);">ストーリーボードの表示</div>
<div class="a" style="left:150px;top:548px;width:872px;height:12px;border:1px solid #000;background:#fff;box-sizing:content-box;"></div>
<div class="a" style="left:152px;top:549px;width:1px;height:4px;background:#000;"></div><div class="a" style="left:165px;top:549px;width:1px;height:2px;background:#000;"></div><div class="a" style="left:179px;top:549px;width:1px;height:2px;background:#000;"></div><div class="a" style="left:192px;top:549px;width:1px;height:2px;background:#000;"></div><div class="a" style="left:205px;top:549px;width:1px;height:2px;background:#000;"></div><div class="a" style="left:219px;top:549px;width:1px;height:2px;background:#000;"></div><div class="a" style="left:232px;top:549px;width:1px;height:4px;background:#000;"></div><div class="a" style="left:245px;top:549px;width:1px;height:2px;background:#000;"></div><div class="a" style="left:259px;top:549px;width:1px;height:2px;background:#000;"></div><div class="a" style="left:272px;top:549px;width:1px;height:2px;background:#000;"></div><div class="a" style="left:285px;top:549px;width:1px;height:2px;background:#000;"></div><div class="a" style="left:299px;top:549px;width:1px;height:2px;background:#000;"></div><div class="a" style="left:312px;top:549px;width:1px;height:4px;background:#000;"></div><div class="a" style="left:325px;top:549px;width:1px;height:2px;background:#000;"></div><div class="a" style="left:339px;top:549px;width:1px;height:2px;background:#000;"></div><div class="a" style="left:352px;top:549px;width:1px;height:2px;background:#000;"></div><div class="a" style="left:365px;top:549px;width:1px;height:2px;background:#000;"></div><div class="a" style="left:379px;top:549px;width:1px;height:2px;background:#000;"></div><div class="a" style="left:392px;top:549px;width:1px;height:4px;background:#000;"></div><div class="a" style="left:405px;top:549px;width:1px;height:2px;background:#000;"></div><div class="a" style="left:419px;top:549px;width:1px;height:2px;background:#000;"></div><div class="a" style="left:432px;top:549px;width:1px;height:2px;background:#000;"></div><div class="a" style="left:445px;top:549px;width:1px;height:2px;background:#000;"></div><div class="a" style="left:459px;top:549px;width:1px;height:2px;background:#000;"></div><div class="a" style="left:472px;top:549px;width:1px;height:4px;background:#000;"></div><div class="a" style="left:485px;top:549px;width:1px;height:2px;background:#000;"></div><div class="a" style="left:499px;top:549px;width:1px;height:2px;background:#000;"></div><div class="a" style="left:512px;top:549px;width:1px;height:2px;background:#000;"></div><div class="a" style="left:525px;top:549px;width:1px;height:2px;background:#000;"></div><div class="a" style="left:539px;top:549px;width:1px;height:2px;background:#000;"></div><div class="a" style="left:552px;top:549px;width:1px;height:4px;background:#000;"></div><div class="a" style="left:565px;top:549px;width:1px;height:2px;background:#000;"></div><div class="a" style="left:579px;top:549px;width:1px;height:2px;background:#000;"></div><div class="a" style="left:592px;top:549px;width:1px;height:2px;background:#000;"></div><div class="a" style="left:605px;top:549px;width:1px;height:2px;background:#000;"></div><div class="a" style="left:619px;top:549px;width:1px;height:2px;background:#000;"></div><div class="a" style="left:632px;top:549px;width:1px;height:4px;background:#000;"></div><div class="a" style="left:645px;top:549px;width:1px;height:2px;background:#000;"></div><div class="a" style="left:659px;top:549px;width:1px;height:2px;background:#000;"></div><div class="a" style="left:672px;top:549px;width:1px;height:2px;background:#000;"></div><div class="a" style="left:685px;top:549px;width:1px;height:2px;background:#000;"></div><div class="a" style="left:699px;top:549px;width:1px;height:2px;background:#000;"></div><div class="a" style="left:712px;top:549px;width:1px;height:4px;background:#000;"></div><div class="a" style="left:725px;top:549px;width:1px;height:2px;background:#000;"></div><div class="a" style="left:739px;top:549px;width:1px;height:2px;background:#000;"></div><div class="a" style="left:752px;top:549px;width:1px;height:2px;background:#000;"></div><div class="a" style="left:765px;top:549px;width:1px;height:2px;background:#000;"></div><div class="a" style="left:779px;top:549px;width:1px;height:2px;background:#000;"></div><div class="a" style="left:792px;top:549px;width:1px;height:4px;background:#000;"></div><div class="a" style="left:805px;top:549px;width:1px;height:2px;background:#000;"></div><div class="a" style="left:819px;top:549px;width:1px;height:2px;background:#000;"></div><div class="a" style="left:832px;top:549px;width:1px;height:2px;background:#000;"></div><div class="a" style="left:845px;top:549px;width:1px;height:2px;background:#000;"></div><div class="a" style="left:859px;top:549px;width:1px;height:2px;background:#000;"></div><div class="a" style="left:872px;top:549px;width:1px;height:4px;background:#000;"></div><div class="a" style="left:885px;top:549px;width:1px;height:2px;background:#000;"></div><div class="a" style="left:899px;top:549px;width:1px;height:2px;background:#000;"></div><div class="a" style="left:912px;top:549px;width:1px;height:2px;background:#000;"></div><div class="a" style="left:925px;top:549px;width:1px;height:2px;background:#000;"></div><div class="a" style="left:939px;top:549px;width:1px;height:2px;background:#000;"></div><div class="a" style="left:952px;top:549px;width:1px;height:4px;background:#000;"></div><div class="a" style="left:965px;top:549px;width:1px;height:2px;background:#000;"></div><div class="a" style="left:979px;top:549px;width:1px;height:2px;background:#000;"></div><div class="a" style="left:992px;top:549px;width:1px;height:2px;background:#000;"></div><div class="a" style="left:1005px;top:549px;width:1px;height:2px;background:#000;"></div><div class="a" style="left:1019px;top:549px;width:1px;height:2px;background:#000;"></div>
<div class="a" style="left:151px;top:549px;width:872px;height:13px;overflow:hidden;"><div class="a" style="left:-151px;top:-549px;width:1024px;height:600px;"><div class="t f" style="left:129px;top:550px;width:56.719px;transform:scaleX(0.82865);color:#000;">0:00:00.00</div><div class="t f" style="left:209px;top:550px;width:56.719px;transform:scaleX(0.82865);color:#000;">0:00:10.00</div><div class="t f" style="left:289px;top:550px;width:56.719px;transform:scaleX(0.82865);color:#000;">0:00:20.00</div><div class="t f" style="left:369px;top:550px;width:56.719px;transform:scaleX(0.82865);color:#000;">0:00:30.00</div><div class="t f" style="left:449px;top:550px;width:56.719px;transform:scaleX(0.82865);color:#000;">0:00:40.00</div><div class="t f" style="left:529px;top:550px;width:56.719px;transform:scaleX(0.82865);color:#000;">0:00:50.00</div><div class="t f" style="left:609px;top:550px;width:56.719px;transform:scaleX(0.82865);color:#000;">0:01:00.00</div><div class="t f" style="left:689px;top:550px;width:56.719px;transform:scaleX(0.82865);color:#000;">0:01:10.00</div><div class="t f" style="left:769px;top:550px;width:56.719px;transform:scaleX(0.82865);color:#000;">0:01:20.00</div><div class="t f" style="left:849px;top:550px;width:56.719px;transform:scaleX(0.82865);color:#000;">0:01:30.00</div><div class="t f" style="left:929px;top:550px;width:56.719px;transform:scaleX(0.82865);color:#000;">0:01:40.00</div><div class="t f" style="left:1009px;top:550px;width:56.719px;transform:scaleX(0.82865);color:#000;">0:01:50.00</div><div class="t f" style="left:1009px;top:550px;width:56.719px;transform:scaleX(0.82865);color:#000;">0:01:50.00</div></div></div>
<div class="a" style="left:424px;top:549px;width:12px;height:9px;border:2px solid #1E6ED2;background:#B4B8F4;"></div>
<div class="a" style="left:150px;top:562px;width:874px;height:1px;background:#000;"></div>
<div class="a" style="left:150px;top:617px;width:874px;height:1px;background:#000;"></div>
<div class="a" style="left:150px;top:671px;width:874px;height:1px;background:#000;"></div>
<div class="a" style="left:150px;top:563px;width:653px;height:54px;background:#EDE6D8;"></div>
<div class="a" style="left:803px;top:566px;width:221px;height:3px;background:repeating-linear-gradient(90deg,#fff 0 3px,transparent 3px 7px);"></div>
<div class="a" style="left:803px;top:611px;width:221px;height:3px;background:repeating-linear-gradient(90deg,#fff 0 3px,transparent 3px 7px);"></div>
<div class="a" style="left:152px;top:564px;width:37px;height:50px;border:1px solid #000;background:#EDE6D8;overflow:hidden;"><div class="a" style="left:37px;top:1px;width:39px;height:3px;background:repeating-linear-gradient(90deg,#fff 0 3px,transparent 3px 7px);"></div><div class="a" style="left:37px;top:47px;width:39px;height:3px;background:repeating-linear-gradient(90deg,#fff 0 3px,transparent 3px 7px);"></div><svg class="a" style="left:0;top:0" width="37" height="50" viewBox="0 0 37 50">
<defs><linearGradient id="cs1" x1="0" y1="0" x2="0" y2="1"><stop offset="0" stop-color="#4E72B4"/><stop offset="1" stop-color="#7E9CCC"/></linearGradient></defs>
<rect width="37" height="50" fill="url(#cs1)"/><rect width="6" height="30" fill="#222C3C"/>
<rect x="6" y="12" width="8" height="10" fill="#3C3E44"/><rect x="13" y="7" width="9" height="15" fill="#A09A92"/><rect x="21" y="8" width="5" height="14" fill="#3A3C42"/><rect x="33" y="4" width="4" height="20" fill="#D8DCE2"/>
<path d="M2 21 Q20 16 37 20 L37 30 L2 30Z" fill="#3C4456"/>
<g fill="#E4E6E8"><rect x="6" y="20" width="2" height="10"/><rect x="13" y="18.5" width="2" height="11"/><rect x="20" y="18" width="2" height="12"/><rect x="27" y="18.5" width="2" height="11"/><rect x="34" y="19.5" width="2" height="10"/></g>
<path d="M2 21 Q20 16 37 20" stroke="#F2F2F0" stroke-width="2" fill="none"/>
<rect x="2" y="28" width="35" height="2.5" fill="#E8E8E6"/>
<rect x="0" y="30.5" width="37" height="4" fill="#12151A"/><rect x="26" y="30.5" width="6" height="3" fill="#C8CACC"/>
<rect x="0" y="34.5" width="37" height="15.5" fill="#3E4C68"/><path d="M0 39 H37 M0 44 H37" stroke="#5A6884" stroke-width=".6" opacity=".5"/>
</svg></div>
<div class="a" style="left:192px;top:564px;width:147px;height:50px;border:1px solid #000;background:#EDE6D8;overflow:hidden;"><div class="a" style="left:66px;top:1px;width:149px;height:3px;background:repeating-linear-gradient(90deg,#fff 0 3px,transparent 3px 7px);"></div><div class="a" style="left:66px;top:47px;width:149px;height:3px;background:repeating-linear-gradient(90deg,#fff 0 3px,transparent 3px 7px);"></div><svg class="a" style="left:0;top:0" width="66" height="50" viewBox="0 0 66 50">
<rect width="66" height="50" fill="#CCCCCA"/>
<rect x="46" y="0" width="20" height="50" fill="#E2E2E0"/>
<path d="M14 0 H48 V6 H14Z" fill="#56575A"/>
<path d="M22 20 L66 30 V50 H22Z" fill="#6C6E7A"/>
<path d="M0 0 H18 L34 22 L20 30 L0 30Z" fill="#5E9A48"/>
<path d="M0 6 L14 2 M0 12 L18 6 M0 18 L24 12 M0 24 L28 18" stroke="#A8C870" stroke-width="2"/>
<path d="M0 26 L24 28 L22 50 H0Z" fill="#6A4E2C"/><path d="M2 34 Q10 30 16 36 L14 50 H2Z" fill="#241C16"/>
<ellipse cx="34" cy="35" rx="16" ry="11" fill="#4A9446"/><path d="M18 40 Q34 50 50 42 L48 50 H20Z" fill="#8A7040"/>
<circle cx="24" cy="30" r="3.6" fill="#C8B040"/><circle cx="24" cy="30" r="2.2" fill="#3C64B0"/>
<path d="M10 6 Q20 0 36 0 L47 2 L48 20 L42 26 L38 20 L36 27 L31 26 L29 20 L18 14 Z" fill="#ECCDA8"/>
<circle cx="62" cy="45" r="3" fill="#9CC840"/>
</svg></div><div class="t f" style="left:271px;top:571px;width:60.703px;transform:scaleX(0.88958);">MOV04306</div>
<div class="a" style="left:342px;top:564px;width:86px;height:50px;border:1px solid #000;background:#EDE6D8;overflow:hidden;"><div class="a" style="left:66px;top:1px;width:88px;height:3px;background:repeating-linear-gradient(90deg,#fff 0 3px,transparent 3px 7px);"></div><div class="a" style="left:66px;top:47px;width:88px;height:3px;background:repeating-linear-gradient(90deg,#fff 0 3px,transparent 3px 7px);"></div><svg class="a" style="left:0;top:0" width="66" height="50" viewBox="0 0 66 50">
<rect width="66" height="50" fill="#34363E"/>
<path d="M40 0 H66 V28 L50 20 L40 10Z" fill="#F2F2F0"/>
<path d="M44 10 L60 10 L58 26 L46 22Z" fill="#6A6C74"/>
<path d="M42 26 L66 36 V50 H40Z" fill="#50525E"/>
<rect x="0" y="0" width="13" height="50" fill="#E6E8E8"/><rect x="3" y="28" width="5" height="14" fill="#2C3038"/><rect x="1" y="44" width="10" height="4" fill="#C8B060"/>
<path d="M13 0 H42 V22 L30 26 L13 26Z" fill="#6E9C5A"/><circle cx="20" cy="8" r="2" fill="#E8EEE4"/><circle cx="28" cy="14" r="2" fill="#E8EEE4"/><path d="M24 2 L27 12" stroke="#303830" stroke-width="2"/>
<path d="M24 22 Q36 14 48 24 L52 40 Q46 46 40 42 L36 34 L30 44 L24 36Z" fill="#5A9442"/>
<path d="M24 30 L30 44 L36 34 L42 46 L46 34 L28 28Z" fill="#7A5A30"/>
<path d="M32 16 Q42 8 56 4 L58 10 L50 14 L44 20 L38 20Z" fill="#E8C8A6"/>
</svg></div><div class="a" style="left:421px;top:572px;width:1px;height:8px;background:#000;"></div>
<div class="a" style="left:433px;top:564px;width:144px;height:48px;border:2px solid #000;background:#fff;"></div>
<div class="a" style="left:436px;top:568px;width:142px;height:45px;border:1px dotted #000;box-sizing:border-box;"></div>
<svg class="a" style="left:433px;top:586px" width="5" height="9"><path d="M0 0 L4.5 4.5 L0 9Z" fill="#000"/></svg>
<svg class="a" style="left:575px;top:586px" width="5" height="9"><path d="M5 0 L.5 4.5 L5 9Z" fill="#000"/></svg>
<svg class="a" style="left:450px;top:574px" width="34" height="32" viewBox="0 0 34 32">
<path d="M9.5 1.5 H23.5 L32 10 V30.5 H9.5Z" fill="#F4F4F4" stroke="#C4C4C4"/><path d="M23.5 1.5 V10 H32" fill="#D4D4D4" stroke="#B8B8B8"/>
<path d="M11 14 L28 11 L29 15 L12 18Z" fill="#1E1E1E"/><path d="M14 13.5 L16 17 M18.5 12.7 L20.5 16.2 M23 11.9 L25 15.4" stroke="#fff" stroke-width="1.3"/>
<rect x="11.5" y="16.5" width="18" height="11.5" rx="1.5" fill="#1E1E1E"/>
<rect x="13" y="18" width="15" height="8" fill="#fff"/>
<text x="13.6" y="25.5" font-family="Liberation Sans" font-weight="bold" font-size="8.5" fill="#D8281A">3</text><text x="18.4" y="25.5" font-family="Liberation Sans" font-weight="bold" font-size="8.5" fill="#2A5EC8">2</text><text x="23.2" y="25.5" font-family="Liberation Sans" font-weight="bold" font-size="8.5" fill="#2AB02A">1</text>
<text x="1" y="10.5" font-family="Liberation Sans" font-weight="bold" font-size="10.5" textLength="23.5" lengthAdjust="spacingAndGlyphs" fill="#000" stroke="#fff" stroke-width="2" paint-order="stroke">mpeg</text>
</svg>
<div class="t f" style="left:511px;top:571px;width:60.703px;transform:scaleX(0.87310);">MOV04306</div>
<div class="a" style="left:582px;top:564px;width:218px;height:50px;border:1px solid #000;background:#EDE6D8;overflow:hidden;"><div class="a" style="left:66px;top:1px;width:220px;height:3px;background:repeating-linear-gradient(90deg,#fff 0 3px,transparent 3px 7px);"></div><div class="a" style="left:66px;top:47px;width:220px;height:3px;background:repeating-linear-gradient(90deg,#fff 0 3px,transparent 3px 7px);"></div><svg class="a" style="left:0;top:0" width="66" height="50" viewBox="0 0 66 50">
<rect width="66" height="50" fill="#1E2A48"/>
<path d="M0 0 H20 V14 L0 22Z" fill="#A8AAB8"/>
<path d="M50 0 H66 V50 H50Z" fill="#C4C8D4"/>
<rect x="52" y="0" width="10" height="44" fill="#3A3028"/><rect x="54" y="36" width="6" height="4" fill="#7A5030"/>
<path d="M18 0 H50 V30 L42 34 L28 34 L20 26Z" fill="#E8E8E2"/>
<path d="M22 26 L50 20 L50 26 L24 32Z" fill="#7A8CD0"/>
<path d="M22 0 L34 0 L38 36 L30 38Z" fill="#F2F2EE"/>
<path d="M30 36 L38 34 L44 44 L36 46Z" fill="#C8A080"/>
<path d="M42 40 L56 46 L54 50 L40 44Z" fill="#E8ECF4"/>
<path d="M26 44 L40 44 L40 50 H26Z" fill="#101010"/>
</svg></div><div class="t f" style="left:661px;top:571px;width:60.703px;transform:scaleX(0.87310);">MOV04310</div>
<div class="a" style="left:431px;top:562px;width:2px;height:134px;background:#1E62C8;"></div>
<div class="t f" style="left:91px;top:584px;width:36.000px;transform:scaleX(0.80556);font-weight:bold;">ビデオ</div>
<div class="a" style="left:130px;top:582px;width:7px;height:7px;border:1px solid #1C2C8C;background:#fff;"></div><div class="a" style="left:132px;top:586px;width:5px;height:1px;background:#1C2C8C;"></div><div class="a" style="left:134px;top:584px;width:1px;height:5px;background:#1C2C8C;"></div>
<div class="t f" style="left:46px;top:638px;width:87.344px;transform:scaleX(0.84723);">オーディオ/音楽</div>
<div class="t f" style="left:25px;top:678px;width:123.344px;transform:scaleX(0.76210);">タイトル オーバーレイ</div>
<div class="a" style="left:150px;top:696px;width:874px;height:18px;background:#F4F3EE;border-left:1px solid #000;border-bottom:1px solid #000;box-sizing:border-box;"></div>
<div class="a" style="left:152px;top:697px;width:14px;height:14px;border-radius:2px;background:linear-gradient(#D6E2FC,#BACEF6);border:1px solid #fff;box-sizing:border-box;"></div>
<svg class="a" style="left:155px;top:700px" width="9" height="9"><path d="M6 1 L2.5 4.5 L6 8" fill="none" stroke="#4D6185" stroke-width="2"/></svg>
<div class="a" style="left:168px;top:697px;width:559px;height:14px;border-radius:2px;background:linear-gradient(#C4D4FC,#BACCF8);border:1px solid #fff;box-sizing:border-box;"></div>
<div class="a" style="left:445px;top:701px;width:6px;height:6px;background:repeating-linear-gradient(90deg,#8CA4E0 0 1px,transparent 1px 2px);"></div>
<div class="a" style="left:1006px;top:697px;width:15px;height:14px;border-radius:2px;background:linear-gradient(#D6E2FC,#BACEF6);border:1px solid #fff;box-sizing:border-box;"></div>
<svg class="a" style="left:1009px;top:700px" width="9" height="9"><path d="M3 1 L6.5 4.5 L3 8" fill="none" stroke="#4D6185" stroke-width="2"/></svg>
<div class="a" style="left:759px;top:528px;width:266px;height:16px;background:rgba(0,0,0,.18);filter:blur(1px);"></div>
<div class="a" style="left:756px;top:525px;width:265px;height:14px;border:1px solid #000;background:#FFFFE1;"></div>
<div class="t f" style="left:758px;top:527px;width:321.016px;transform:scaleX(0.81927);">クリップを現在のフレームで 2 つのクリップに分割 (Ctrl+L)</div>
<!-- status bar -->
<div class="a" style="left:0;top:714px;width:1024px;height:24px;background:linear-gradient(#C9C5B2,#E0DCCA 2px,#ECE9D8 5px,#ECE9D8 20px,#E2DECB);"></div>
<div class="t f" style="left:1px;top:721px;width:48.000px;transform:scaleX(1.02083);">準備完了</div>
<!-- taskbar strip -->
<div class="a" style="left:0;top:738px;width:1024px;height:4px;background:linear-gradient(#2254C4,#3A7EE6 2px);"></div>
<div class="a" style="left:0;top:738px;width:107px;height:4px;background:linear-gradient(#2E862E,#58A456 2px);"></div>
<div class="a" style="left:440px;top:740px;width:158px;height:2px;background:#D88A3A;"></div>
<div class="a" style="left:789px;top:738px;width:235px;height:4px;background:linear-gradient(#1A7ED8,#1CA4EC 2px);border-left:1px solid #0E3A8A;box-sizing:border-box;"></div>


</body></html>
